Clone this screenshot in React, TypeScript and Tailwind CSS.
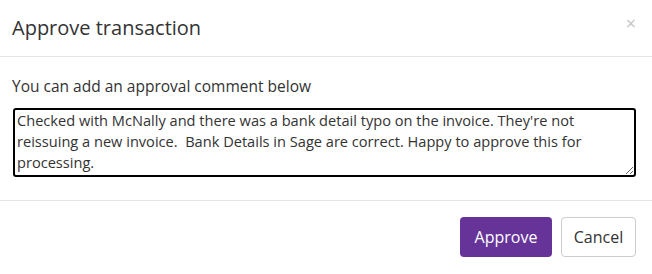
import React from 'react';

export default function App() {
  const [comment, setComment] = React.useState(
    "Checked with McNally and there was a bank detail typo on the invoice. They're not reissuing a new invoice.  Bank Details in Sage are correct. Happy to approve this for processing."
  );

  return (
    <div className="h-[274px] w-[652px] bg-white text-[#333] font-['Open_Sans',sans-serif]">
      {/* header */}
      <div className="flex h-[57px] items-center justify-between border-b border-[#e5e5e5] pl-3 pr-[16px]">
        <h4 className="text-[20px] leading-none font-normal">Approve transaction</h4>
        <button className="mb-[10px] text-[18px] leading-none text-[#c4c4c4]">×</button>
      </div>

      {/* body */}
      <div className="px-3 pt-[19px] pb-[23px]">
        <p className="text-[15.5px] leading-5">You can add an approval comment below</p>
        <textarea
          value={comment}
          onChange={(e) => setComment(e.target.value)}
          className="mt-[12px] ml-px block h-[69px] w-[623px] resize-y rounded-[3px] border-2 border-black px-[2px] pt-0 text-[14.6px] leading-[21px] text-[#333] outline-none"
        />
      </div>

      {/* footer */}
      <div className="flex justify-end gap-[9px] border-t border-[#e5e5e5] pt-[16px] pr-[16px]">
        <button className="h-[40px] w-[92px] rounded-[4px] bg-[#663399] text-[16px] text-white">
          Approve
        </button>
        <button className="h-[40px] w-[75px] rounded-[4px] border border-[#ccc] bg-white text-[16px] text-[#333]">
          Cancel
        </button>
      </div>
    </div>
  );
}
